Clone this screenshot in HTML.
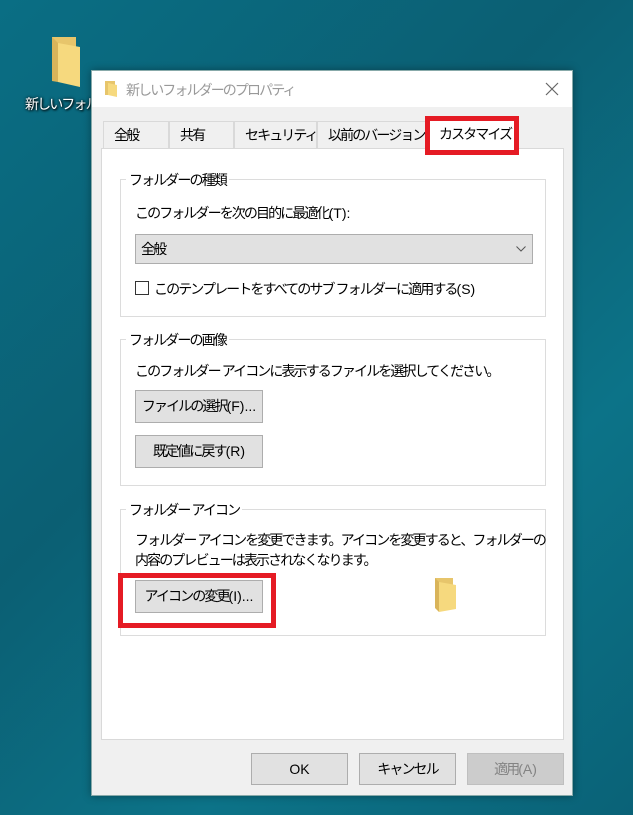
<!DOCTYPE html>
<html><head><meta charset="utf-8"><style>
*{box-sizing:border-box;margin:0;padding:0}
body{width:633px;height:815px;overflow:hidden;position:relative;background:linear-gradient(135deg,#0a6e84 0%,#0b5f73 40%,#0c7388 70%,#0a6277 100%);font-family:"Liberation Sans","Noto Sans CJK JP",sans-serif;font-size:14px;color:#000;letter-spacing:-1.9px;white-space:nowrap}
.l{letter-spacing:0}
.a{position:absolute}
.dlg{left:91px;top:70px;width:482px;height:726px;background:#f0f0f0;border:1px solid #8aa;box-shadow:0 0 8px rgba(0,0,0,.35)}
.title{left:0;top:0;width:480px;height:36px;background:#fff}
.tab{top:50px;height:28px;border:1px solid #d9d9d9;border-bottom:none;background:#f0f0f0;line-height:26px;padding-left:10px}
.panel{left:9px;top:77px;width:463px;height:592px;background:#fff;border:1px solid #d9d9d9}
.grp{border:1px solid #dcdcdc}
.lg{background:#fff;padding:0 3px;line-height:16px}
.btn{background:#e1e1e1;border:1px solid #adadad;text-align:center;line-height:30px}
.red{border:5px solid #e51b24}
</style></head><body>
<svg class="a" style="left:48px;top:35px" width="38" height="52" viewBox="0 0 38 52"><path d="M4 2h24v44H4z" fill="#e7c56b"/><path d="M10 8l22 4v40L10 47z" fill="#f6d97e"/><path d="M4 2l6 6v39l-6-1z" fill="#d9b45a"/></svg>
<div class="a" style="left:25px;top:94px;color:#fff;text-shadow:0 0 3px #000,1px 1px 2px #000">新しいフォルダー</div>
<div class="a dlg">
 <div class="a title"></div>
 <svg class="a" style="left:13px;top:10px" width="12" height="16" viewBox="0 0 12 16"><path d="M0 0h10v14H0z" fill="#e7c56b"/><path d="M3 2l9 2v12L3 14z" fill="#f6d97e"/></svg>
 <div class="a" style="left:34px;top:9px;color:#999">新しいフォルダーのプロパティ</div>
 <svg class="a" style="left:452px;top:10px" width="16" height="16"><path d="M2 2L14 14M14 2L2 14" stroke="#666" stroke-width="1.2"/></svg>
 <div class="a tab" style="left:11px;width:66px">全般</div>
 <div class="a tab" style="left:77px;width:65px">共有</div>
 <div class="a tab" style="left:142px;width:83px">セキュリティ</div>
 <div class="a tab" style="left:225px;width:111px">以前のバージョン</div>
 <div class="a panel">
  <div class="a grp" style="left:18px;top:30px;width:426px;height:138px"></div>
  <div class="a lg" style="left:24px;top:23px">フォルダーの種類</div>
  <div class="a" style="left:33px;top:54px">このフォルダーを次の目的に最適化<span class="l">(T):</span></div>
  <div class="a" style="left:33px;top:85px;width:398px;height:30px;background:#e1e1e1;border:1px solid #adadad;line-height:28px;padding-left:5px">全般
   <svg class="a" style="right:6px;top:11px" width="10" height="6"><path d="M0.5 0.5L5 5L9.5 0.5" stroke="#555" fill="none"/></svg></div>
  <div class="a" style="left:33px;top:132px;width:14px;height:14px;border:1px solid #333"></div>
  <div class="a" style="left:52px;top:130px">このテンプレートをすべてのサブ フォルダーに適用する<span class="l">(S)</span></div>

  <div class="a grp" style="left:18px;top:190px;width:426px;height:147px"></div>
  <div class="a lg" style="left:24px;top:183px">フォルダーの画像</div>
  <div class="a" style="left:33px;top:212px">このフォルダー アイコンに表示するファイルを選択してください。</div>
  <div class="a btn" style="left:33px;top:241px;width:128px;height:33px">ファイルの選択<span class="l">(F)...</span></div>
  <div class="a btn" style="left:33px;top:286px;width:128px;height:33px">既定値に戻す<span class="l">(R)</span></div>

  <div class="a grp" style="left:18px;top:360px;width:426px;height:127px"></div>
  <div class="a lg" style="left:24px;top:353px">フォルダー アイコン</div>
  <div class="a" style="left:33px;top:381px;line-height:20px">フォルダー アイコンを変更できます。アイコンを変更すると、フォルダーの<br>内容のプレビューは表示されなくなります。</div>
  <div class="a btn" style="left:33px;top:431px;width:128px;height:33px">アイコンの変更<span class="l">(I)...</span></div>
  <svg class="a" style="left:331px;top:429px" width="24" height="34" viewBox="0 0 24 34"><path d="M2 0h18v30H2z" fill="#e7c56b"/><path d="M6 4l17 3v24L6 34z" fill="#f6d97e"/><path d="M2 0l4 4v30l-4-4z" fill="#d9b45a"/></svg>
 </div>
 <div class="a" style="left:336px;top:48px;width:89px;height:30px;background:#fff;border:1px solid #d9d9d9;border-bottom:none;line-height:28px;padding-left:10px">カスタマイズ</div>
 <div class="a red" style="left:333px;top:45px;width:94px;height:39px"></div>
 <div class="a red" style="left:26px;top:502px;width:158px;height:55px"></div>
 <div class="a btn l" style="left:159px;top:682px;width:97px;height:32px">OK</div>
 <div class="a btn" style="left:267px;top:682px;width:97px;height:32px">キャンセル</div>
 <div class="a btn" style="left:375px;top:682px;width:97px;height:32px;background:#ccc;border-color:#bfbfbf;color:#838383">適用<span class="l">(A)</span></div>
</div>
</body></html>
